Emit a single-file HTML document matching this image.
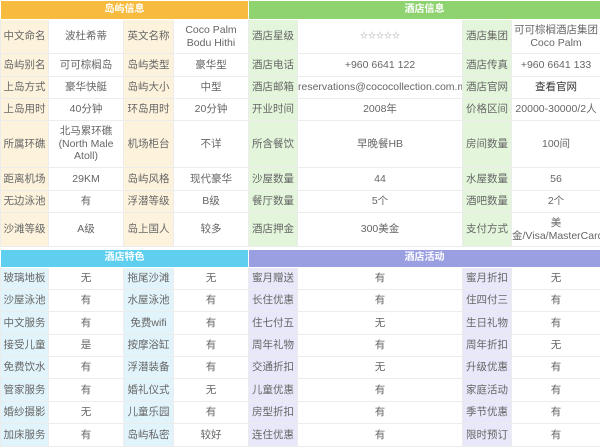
<!DOCTYPE html>
<html><head><meta charset="utf-8"><style>
*{margin:0;padding:0;box-sizing:border-box}
body{width:600px;height:445px;overflow:hidden;background:#fff;font-family:"Liberation Sans","Noto Sans CJK SC",sans-serif;font-size:10.5px;color:#666}
table{border-collapse:collapse;table-layout:fixed;width:600px}
td{border:1px solid #ececec;text-align:center;vertical-align:middle;line-height:12.5px;overflow:hidden;white-space:nowrap;padding:0}
td.w{white-space:normal}
.h{color:#fff;font-weight:bold;font-size:10px;border-color:#fff}
.ho{background:#f6bb3f}.hg{background:#8fd370}.hb{background:#5fcff0}.hp{background:#9a9fe2}
.o{background:#fdf3dd}.g{background:#e3f5db}.b{background:#e1f4fb}.p{background:#e8e8fa}
</style></head><body>
<table>
<colgroup><col style="width:48px"><col style="width:75px"><col style="width:50px"><col style="width:75px"><col style="width:49px"><col style="width:165px"><col style="width:49px"><col style="width:89px"></colgroup>
<tr style="height:19px"><td colspan="4" class="h ho">岛屿信息</td><td colspan="4" class="h hg">酒店信息</td></tr>
<tr style="height:34px"><td class="o">中文命名</td><td>波杜希蒂</td><td class="o">英文名称</td><td class="w">Coco Palm Bodu Hithi</td><td class="g">酒店星级</td><td style="color:#aaa;font-size:8px">☆☆☆☆☆</td><td class="g">酒店集团</td><td class="w">可可棕榈酒店集团 Coco Palm</td></tr>
<tr style="height:23px"><td class="o">岛屿别名</td><td>可可棕榈岛</td><td class="o">岛屿类型</td><td>豪华型</td><td class="g">酒店电话</td><td>+960 6641 122</td><td class="g">酒店传真</td><td>+960 6641 133</td></tr>
<tr style="height:22px"><td class="o">上岛方式</td><td>豪华快艇</td><td class="o">岛屿大小</td><td>中型</td><td class="g">酒店邮箱</td><td style="text-align:right;padding-right:1px">reservations@cococollection.com.mv</td><td class="g">酒店官网</td><td style="color:#333">查看官网</td></tr>
<tr style="height:22px"><td class="o">上岛用时</td><td>40分钟</td><td class="o">环岛用时</td><td>20分钟</td><td class="g">开业时间</td><td>2008年</td><td class="g">价格区间</td><td>20000-30000/2人</td></tr>
<tr style="height:47px"><td class="o">所属环礁</td><td class="w">北马累环礁 (North Male Atoll)</td><td class="o">机场柜台</td><td>不详</td><td class="g">所含餐饮</td><td>早晚餐HB</td><td class="g">房间数量</td><td>100间</td></tr>
<tr style="height:23px"><td class="o">距离机场</td><td>29KM</td><td class="o">岛屿风格</td><td>现代豪华</td><td class="g">沙屋数量</td><td>44</td><td class="g">水屋数量</td><td>56</td></tr>
<tr style="height:22px"><td class="o">无边泳池</td><td>有</td><td class="o">浮潜等级</td><td>B级</td><td class="g">餐厅数量</td><td>5个</td><td class="g">酒吧数量</td><td>2个</td></tr>
<tr style="height:34px"><td class="o">沙滩等级</td><td>A级</td><td class="o">岛上国人</td><td>较多</td><td class="g">酒店押金</td><td>300美金</td><td class="g">支付方式</td><td class="w">美<br>金/Visa/MasterCard</td></tr>
</table>
<div style="height:2px"></div>
<table>
<colgroup><col style="width:48px"><col style="width:75px"><col style="width:50px"><col style="width:75px"><col style="width:49px"><col style="width:165px"><col style="width:49px"><col style="width:89px"></colgroup>
<tr style="height:18px"><td colspan="4" class="h hb">酒店特色</td><td colspan="4" class="h hp">酒店活动</td></tr>
<tr style="height:22px"><td class="b">玻璃地板</td><td>无</td><td class="b">拖尾沙滩</td><td>无</td><td class="p">蜜月赠送</td><td>有</td><td class="p">蜜月折扣</td><td>无</td></tr>
<tr style="height:22px"><td class="b">沙屋泳池</td><td>有</td><td class="b">水屋泳池</td><td>有</td><td class="p">长住优惠</td><td>有</td><td class="p">住四付三</td><td>有</td></tr>
<tr style="height:23px"><td class="b">中文服务</td><td>有</td><td class="b">免费wifi</td><td>有</td><td class="p">住七付五</td><td>无</td><td class="p">生日礼物</td><td>有</td></tr>
<tr style="height:22px"><td class="b">接受儿童</td><td>是</td><td class="b">按摩浴缸</td><td>有</td><td class="p">周年礼物</td><td>有</td><td class="p">周年折扣</td><td>无</td></tr>
<tr style="height:22px"><td class="b">免费饮水</td><td>有</td><td class="b">浮潜装备</td><td>有</td><td class="p">交通折扣</td><td>无</td><td class="p">升级优惠</td><td>有</td></tr>
<tr style="height:23px"><td class="b">管家服务</td><td>有</td><td class="b">婚礼仪式</td><td>无</td><td class="p">儿童优惠</td><td>有</td><td class="p">家庭活动</td><td>有</td></tr>
<tr style="height:22px"><td class="b">婚纱摄影</td><td>无</td><td class="b">儿童乐园</td><td>有</td><td class="p">房型折扣</td><td>有</td><td class="p">季节优惠</td><td>有</td></tr>
<tr style="height:23px"><td class="b">加床服务</td><td>有</td><td class="b">岛屿私密</td><td>较好</td><td class="p">连住优惠</td><td>有</td><td class="p">限时预订</td><td>有</td></tr>
</table>
</body></html>
